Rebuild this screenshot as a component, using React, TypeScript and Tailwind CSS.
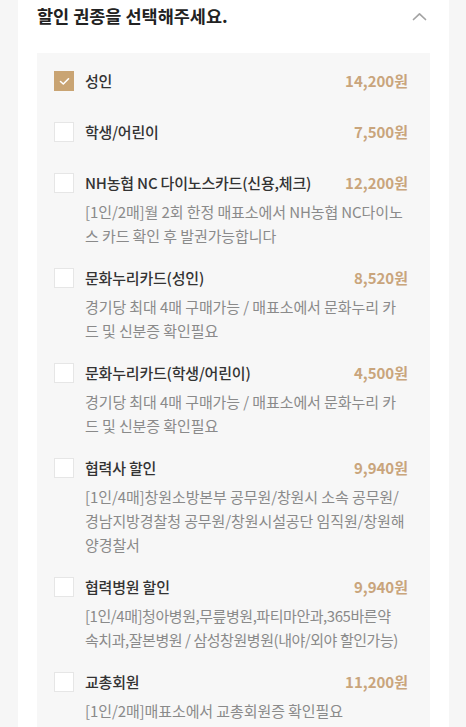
import { useState } from 'react';

type Ticket = {
  name: string;
  price: string;
  desc?: string;
  tight?: boolean;
};

const tickets: Ticket[] = [
  { name: '성인', price: '14,200원' },
  { name: '학생/어린이', price: '7,500원' },
  {
    name: 'NH농협 NC 다이노스카드(신용,체크)',
    price: '12,200원',
    desc: '[1인/2매]월 2회 한정 매표소에서 NH농협 NC다이노스 카드 확인 후 발권가능합니다',
  },
  {
    name: '문화누리카드(성인)',
    price: '8,520원',
    desc: '경기당 최대 4매 구매가능 / 매표소에서 문화누리 카드 및 신분증 확인필요',
  },
  {
    name: '문화누리카드(학생/어린이)',
    price: '4,500원',
    desc: '경기당 최대 4매 구매가능 / 매표소에서 문화누리 카드 및 신분증 확인필요',
  },
  {
    name: '협력사 할인',
    price: '9,940원',
    desc: '[1인/4매]창원소방본부 공무원/창원시 소속 공무원/경남지방경찰청 공무원/창원시설공단 임직원/창원해양경찰서',
  },
  {
    name: '협력병원 할인',
    price: '9,940원',
    desc: '[1인/4매]청아병원,무릎병원,파티마안과,365바른약\n속치과,잘본병원 / 삼성창원병원(내야/외야 할인가능)',
    tight: true,
  },
  {
    name: '교총회원',
    price: '11,200원',
    desc: '[1인/2매]매표소에서 교총회원증 확인필요',
  },
];

function Checkbox({ checked }: { checked: boolean }) {
  if (checked) {
    return (
      <div className="flex h-[20px] w-[20px] shrink-0 items-center justify-center bg-[#c9a473]">
        <svg width="11" height="9" viewBox="0 0 11 9" fill="none">
          <path d="M1.5 4.5 L4.3 7 L9.5 1.8" stroke="#fff" strokeWidth="1.6" strokeLinecap="round" strokeLinejoin="round" />
        </svg>
      </div>
    );
  }
  return <div className="h-[20px] w-[20px] shrink-0 border border-[#e6e6e6] bg-white" />;
}

export default function App() {
  const [selected, setSelected] = useState(0);

  return (
    <div
      className="h-[727px] overflow-hidden bg-[#f6f6f6] pl-[18px] pr-[17px]"
      style={{ fontFamily: '"Noto Sans CJK KR", "Noto Sans", sans-serif' }}
    >
      <div className="min-h-[727px] bg-white px-[19px]">
        <div className="flex h-[32px] items-center justify-between">
          <h2 className="text-[17.5px] font-bold text-[#222]">할인 권종을 선택해주세요.</h2>
          <svg width="15" height="9" viewBox="0 0 15 9" fill="none" className="mr-[3px]">
            <path d="M1.5 7.5 L7.5 1.8 L13.5 7.5" stroke="#a3a3a3" strokeWidth="1.7" strokeLinecap="round" strokeLinejoin="round" />
          </svg>
        </div>

        <div className="mt-[21px] bg-[#f7f7f7] pl-[17px] pr-[22px] pt-[17px]">
          {tickets.map((t, i) => (
            <div
              key={t.name + i}
              onClick={() => setSelected(i)}
              className={`flex cursor-pointer gap-[11px] ${t.desc ? 'pb-[19px]' : 'pb-[29px]'}`}
            >
              <div className="pt-[1px]">
                <Checkbox checked={selected === i} />
              </div>
              <div className="min-w-0 flex-1">
                <div className="flex h-[22px] items-center justify-between">
                  <span className="text-[15px] font-medium tracking-[-0.2px] text-[#333]">{t.name}</span>
                  <span className="text-[15px] font-semibold text-[#c9a57c]">{t.price}</span>
                </div>
                {t.desc && (
                  <p
                    className={`mt-[6px] whitespace-pre-line text-[15px] leading-[24px] text-[#8a8a8a] ${
                      t.tight ? 'tracking-[-0.45px]' : 'tracking-[-0.1px]'
                    }`}
                  >
                    {t.desc}
                  </p>
                )}
              </div>
            </div>
          ))}
        </div>
      </div>
    </div>
  );
}
